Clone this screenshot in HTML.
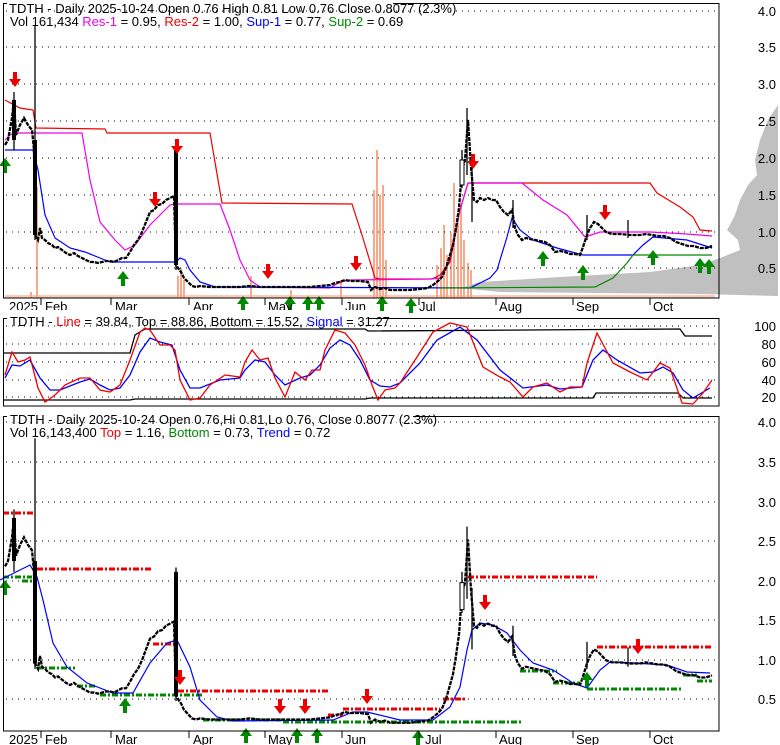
<!DOCTYPE html>
<html><head><meta charset="utf-8"><style>
html,body{margin:0;padding:0;background:#fff}
svg{display:block}
text{font-family:"Liberation Sans",Arial,sans-serif;font-size:13px}
</style></head><body>
<svg width="780" height="745" viewBox="0 0 780 745" xmlns="http://www.w3.org/2000/svg">
<defs>
<g id="dn"><rect x="-2" y="-8" width="4" height="8" fill="#e00"/><polygon points="-6,-1 6,-1 0,7" fill="#e00"/></g>
<g id="up"><rect x="-2" y="0" width="4" height="8" fill="#080"/><polygon points="-6,1 6,1 0,-7" fill="#080"/></g>
<g id="c">
<polyline vector-effect="non-scaling-stroke" fill="none" stroke="#000" stroke-width="2.3" stroke-dasharray="4 1" points="5,145 8,140 12,118 14,100 16,135 20,125 24,118 28,125 32,130 34,150 35,235 38,240 40,228 42,238 45,240 48,243 52,245 55,248 58,247 62,250 66,253 70,255 74,253 78,256 82,258 86,260 90,262 94,262 98,263 102,262 106,261 110,261 114,262 118,260 122,258 126,258 130,252 134,245 138,240 142,232 146,222 150,212 154,210 158,205 162,204 166,200 170,198 174,196 176,265 178,268 181,272 184,278 188,282 192,286 196,287 200,286 210,287 220,287 230,287 240,287 250,286 260,287 270,287 280,287 290,287 300,287 310,287 320,286 330,285 335,283 340,282 345,280 350,281 360,281 368,282 371,290 375,287 380,289 385,288 390,290 400,290 410,290 420,289 428,288 433,285 438,281 442,277 446,268 450,255 453,245 456,228 459,208 462,170 465,160 468,120 471,167 474,200 477,202 480,198 484,200 488,198 492,200 496,200 500,207 504,212 508,215 512,210 515,228 518,235 522,240 526,238 530,239 535,240 540,241 545,242 550,245 555,252 560,251 565,252 570,254 575,254 580,255 583,247 587,235 590,228 594,222 598,224 602,228 606,232 612,234 620,234 630,235 640,235 646,234 652,235 658,236 664,236 670,238 676,242 682,244 688,246 694,246 700,248 706,248 712,246"/>
<g stroke="#000" stroke-width="1.3">
<line x1="35" y1="26" x2="35" y2="240" vector-effect="non-scaling-stroke"/>
<line x1="14" y1="92" x2="14" y2="150" vector-effect="non-scaling-stroke"/>
<line x1="176" y1="146" x2="176" y2="270" vector-effect="non-scaling-stroke"/>
<line x1="467" y1="108" x2="467" y2="175" vector-effect="non-scaling-stroke"/>
<line x1="462" y1="150" x2="462" y2="188" vector-effect="non-scaling-stroke"/>
<line x1="472" y1="165" x2="472" y2="222" vector-effect="non-scaling-stroke"/>
<line x1="513" y1="200" x2="513" y2="228" vector-effect="non-scaling-stroke"/>
<line x1="587" y1="215" x2="587" y2="240" vector-effect="non-scaling-stroke"/>
<line x1="628" y1="220" x2="628" y2="238" vector-effect="non-scaling-stroke"/>
</g>
<rect x="33" y="140" width="4" height="95" fill="#000"/>
<rect x="174" y="150" width="4" height="115" fill="#000"/>
<rect x="460" y="160" width="4" height="25" fill="#fff" stroke="#000" vector-effect="non-scaling-stroke"/>
<rect x="12" y="100" width="4" height="40" fill="#000"/>
</g>
</defs>

<g fill="#f9a889">
<rect x="36" y="187" width="2" height="111"/><rect x="177" y="276" width="2" height="22"/><rect x="180" y="268" width="2" height="30"/><rect x="183" y="280" width="2" height="18"/><rect x="250" y="276" width="2" height="22"/><rect x="373" y="190" width="2" height="108"/><rect x="376" y="150" width="2" height="148"/><rect x="379" y="195" width="2" height="103"/><rect x="382" y="185" width="2" height="113"/><rect x="385" y="260" width="2" height="38"/><rect x="436" y="265" width="2" height="33"/><rect x="440" y="248" width="2" height="50"/><rect x="443" y="225" width="2" height="73"/><rect x="446" y="255" width="2" height="43"/><rect x="450" y="233" width="2" height="65"/><rect x="453" y="183" width="2" height="115"/><rect x="457" y="223" width="2" height="75"/><rect x="460" y="205" width="2" height="93"/><rect x="463" y="240" width="2" height="58"/><rect x="467" y="263" width="2" height="35"/><rect x="470" y="270" width="2" height="28"/><rect x="340" y="280" width="2" height="18"/><rect x="290" y="290" width="2" height="8"/><rect x="30" y="292" width="2" height="6"/>
<rect x="5" y="295" width="710" height="3" opacity="0.6"/>
</g>
<polygon fill="#c0c0c0" points="778,105 768,120 760,140 755,160 757,175 748,185 740,200 735,215 727,230 738,240 740,250 720,258 700,265 650,272 560,277 480,282 460,288 500,292 700,294 778,296"/>
<g stroke="#000" stroke-width="1" stroke-dasharray="1 5" fill="none">
<line x1="6" y1="11" x2="719" y2="11"/><line x1="6" y1="47" x2="719" y2="47"/><line x1="6" y1="84" x2="719" y2="84"/><line x1="6" y1="121" x2="719" y2="121"/><line x1="6" y1="158" x2="719" y2="158"/><line x1="6" y1="195" x2="719" y2="195"/><line x1="6" y1="232" x2="719" y2="232"/><line x1="6" y1="268" x2="719" y2="268"/>
</g>
<g fill="none" stroke-width="1.2">
<polyline stroke="#e00" points="5,100 20,108 33,110 36,128 105,129 107,133 210,133 222,203 352,204 362,235 375,278 380,279 432,279 440,275 450,262 460,210 468,183 650,183 657,193 680,207 693,217 700,230 712,231"/>
<polyline stroke="#e0e" points="5,140 10,135 14,133 82,133 90,180 100,222 115,240 125,250 135,245 150,225 170,205 175,204 220,204 230,230 240,260 250,280 260,287 330,288 340,282 350,280 430,279 440,278 448,265 460,210 468,183 522,183 543,200 567,215 585,237 600,232 650,232 687,234 712,236"/>
<polyline stroke="#00f" points="5,150 33,150 38,170 45,215 55,238 70,248 85,252 100,258 110,262 176,262 180,258 185,260 190,270 200,282 215,287 470,288 480,283 490,278 497,270 507,237 512,218 520,230 533,240 557,248 583,255 633,255 643,245 653,237 687,240 712,248"/>
<polyline stroke="#080" points="440,288 595,287 613,278 627,263 633,255 712,255"/>
</g>
<use href="#c"/>
<g>
<use href="#dn" x="15" y="80"/><use href="#dn" x="177" y="147"/><use href="#dn" x="155" y="200"/><use href="#dn" x="268" y="272"/><use href="#dn" x="356" y="264"/><use href="#dn" x="473" y="162"/><use href="#dn" x="605" y="213"/>
<use href="#up" x="5" y="165"/><use href="#up" x="123" y="278"/><use href="#up" x="243" y="303"/><use href="#up" x="290" y="303"/><use href="#up" x="308" y="303"/><use href="#up" x="319" y="303"/><use href="#up" x="382" y="303"/><use href="#up" x="411" y="305"/><use href="#up" x="543" y="258"/><use href="#up" x="583" y="272"/><use href="#up" x="653" y="257"/><use href="#up" x="700" y="265"/><use href="#up" x="709" y="266"/>
</g>
<rect x="3.5" y="3.5" width="715.5" height="294.5" fill="none" stroke="#000"/>
<rect x="7" y="0" width="386" height="8" fill="#fff"/>
<text x="9" y="13">TDTH - Daily 2025-10-24 Open 0.76  High 0.81  Low 0.76  Close 0.8077 (2.3%)</text>
<text x="10" y="26">Vol 161,434 <tspan fill="#e0e">Res-1</tspan> = 0.95, <tspan fill="#e00">Res-2</tspan> = 1.00, <tspan fill="#00f">Sup-1</tspan> = 0.77, <tspan fill="#080">Sup-2</tspan> = 0.69</text>
<g text-anchor="end">
<text x="776" y="16">4.0</text><text x="776" y="52">3.5</text><text x="776" y="89">3.0</text><text x="776" y="126">2.5</text><text x="776" y="163">2.0</text><text x="776" y="200">1.5</text><text x="776" y="237">1.0</text><text x="776" y="273">0.5</text>
</g>
<g stroke="#000"><line x1="41" y1="298" x2="41" y2="305"/><line x1="111" y1="298" x2="111" y2="305"/><line x1="189" y1="298" x2="189" y2="305"/><line x1="265" y1="298" x2="265" y2="305"/><line x1="342" y1="298" x2="342" y2="305"/><line x1="419" y1="298" x2="419" y2="305"/><line x1="496" y1="298" x2="496" y2="305"/><line x1="573" y1="298" x2="573" y2="305"/><line x1="650" y1="298" x2="650" y2="305"/></g>
<g><text x="9" y="311">2025</text><text x="45" y="311">Feb</text><text x="115" y="311">Mar</text><text x="193" y="311">Apr</text><text x="268" y="311">May</text><text x="345" y="311">Jun</text><text x="419" y="311">Jul</text><text x="499" y="311">Aug</text><text x="576" y="311">Sep</text><text x="653" y="311">Oct</text></g>

<g stroke="#000" stroke-width="1" stroke-dasharray="1 5" fill="none">
<line x1="6" y1="326" x2="719" y2="326"/><line x1="6" y1="344" x2="719" y2="344"/><line x1="6" y1="362" x2="719" y2="362"/><line x1="6" y1="380" x2="719" y2="380"/><line x1="6" y1="397" x2="719" y2="397"/>
</g>
<g fill="none" stroke-width="1.3">
<polyline stroke="#000" points="4,353 130,353 135,335 145,329 365,329 368,331 680,329 685,336 712,336"/>
<polyline stroke="#000" points="4,400 130,400 135,399 365,399 370,398 593,398 596,393 678,393 683,398 712,398"/>
<polyline stroke="#00f" points="5,378 12,365 20,366 30,360 40,378 50,390 60,390 80,382 90,379 100,385 110,390 120,388 130,375 140,352 150,338 160,342 172,345 180,370 190,388 200,388 220,380 240,378 245,370 255,360 265,362 275,375 285,385 300,378 310,375 320,365 330,348 340,340 350,345 360,360 370,380 380,386 390,387 400,383 420,363 437,340 460,327 477,340 500,370 523,388 547,385 560,389 582,387 593,360 603,350 617,360 640,373 653,372 663,367 673,373 683,390 693,398 710,388"/>
<polyline stroke="#e00" points="5,375 12,352 18,362 25,360 30,357 38,388 45,402 55,395 65,385 80,378 90,378 100,390 110,392 120,385 130,360 140,332 145,328 150,330 160,345 170,345 175,350 180,380 190,400 200,398 210,385 225,375 240,377 245,362 252,350 260,360 268,358 275,378 285,397 295,372 305,380 312,370 320,370 325,350 335,330 345,333 355,345 365,365 372,385 378,400 385,390 395,388 400,383 417,357 433,332 450,323 467,327 483,367 500,377 510,382 523,397 533,387 547,383 560,392 570,387 582,387 587,363 597,333 613,363 630,372 647,380 660,363 670,368 682,403 693,404 703,393 712,380"/>
</g>
<rect x="3.5" y="318.5" width="715.5" height="87.5" fill="none" stroke="#000"/>
<rect x="7" y="310" width="362" height="13" fill="#fff"/>
<text x="10" y="326">TDTH - <tspan fill="#e00">Line</tspan> = 39.84, Top = 88.86, Bottom = 15.52, <tspan fill="#00f">Signal</tspan> = 31.27</text>
<g text-anchor="end"><text x="776" y="331">100</text><text x="776" y="349">80</text><text x="776" y="367">60</text><text x="776" y="385">40</text><text x="776" y="402">20</text></g>

<g stroke="#000" stroke-width="1" stroke-dasharray="1 5" fill="none">
<line x1="6" y1="422" x2="719" y2="422"/><line x1="6" y1="462" x2="719" y2="462"/><line x1="6" y1="502" x2="719" y2="502"/><line x1="6" y1="541" x2="719" y2="541"/><line x1="6" y1="581" x2="719" y2="581"/><line x1="6" y1="620" x2="719" y2="620"/><line x1="6" y1="660" x2="719" y2="660"/><line x1="6" y1="699" x2="719" y2="699"/>
</g>
<g fill="none" stroke-width="3" stroke-dasharray="6 2 2 2">
<g stroke="#e00"><line x1="3" y1="513" x2="35" y2="513"/><line x1="37" y1="569" x2="152" y2="569"/><line x1="153" y1="644" x2="175" y2="644"/><line x1="178" y1="691" x2="328" y2="691"/><line x1="328" y1="715" x2="343" y2="715"/><line x1="343" y1="709" x2="440" y2="709"/><line x1="443" y1="699" x2="467" y2="699"/><line x1="468" y1="577" x2="597" y2="577"/><line x1="597" y1="647" x2="713" y2="647"/></g>
<g stroke="#080"><line x1="3" y1="577" x2="32" y2="577"/><line x1="22" y1="581" x2="32" y2="581"/><line x1="37" y1="668" x2="75" y2="668"/><line x1="77" y1="686" x2="97" y2="686"/><line x1="100" y1="695" x2="203" y2="695"/><line x1="203" y1="720" x2="283" y2="720"/><line x1="283" y1="722" x2="523" y2="722"/><line x1="520" y1="671" x2="557" y2="671"/><line x1="553" y1="683" x2="580" y2="683"/><line x1="587" y1="689" x2="683" y2="689"/><line x1="683" y1="675" x2="697" y2="675"/><line x1="697" y1="681" x2="712" y2="681"/></g>
</g>
<polyline fill="none" stroke="#00f" stroke-width="1.2" points="0,580 30,565 37,577 43,600 53,643 67,667 87,683 113,693 133,693 150,663 167,643 177,640 190,667 200,700 217,717 233,721 333,720 353,712 367,712 400,720 433,720 450,707 460,687 467,650 472,630 480,623 493,625 507,633 520,650 533,663 553,670 573,683 587,688 600,670 610,662 633,663 667,665 687,672 710,673"/>
<use href="#c" transform="matrix(1 0 0 1.0777 0 410.2)"/>
<g>
<use href="#dn" x="180" y="678"/><use href="#dn" x="280" y="707"/><use href="#dn" x="305" y="707"/><use href="#dn" x="367" y="697"/><use href="#dn" x="485" y="603"/><use href="#dn" x="638" y="647"/>
<use href="#up" x="5" y="587"/><use href="#up" x="125" y="705"/><use href="#up" x="246" y="735"/><use href="#up" x="297" y="735"/><use href="#up" x="317" y="735"/><use href="#up" x="418" y="737"/><use href="#up" x="587" y="679"/>
</g>
<rect x="3.5" y="416.5" width="715.5" height="314.5" fill="none" stroke="#000"/>
<rect x="7" y="408" width="406" height="14" fill="#fff"/>
<text x="10" y="424">TDTH - Daily 2025-10-24 Open 0.76,Hi 0.81,Lo 0.76, Close 0.8077 (2.3%)</text>
<text x="10" y="437">Vol 16,143,400 <tspan fill="#e00">Top</tspan> = 1.16, <tspan fill="#080">Bottom</tspan> = 0.73, <tspan fill="#00f">Trend</tspan> = 0.72</text>
<g text-anchor="end">
<text x="776" y="427">4.0</text><text x="776" y="467">3.5</text><text x="776" y="507">3.0</text><text x="776" y="546">2.5</text><text x="776" y="586">2.0</text><text x="776" y="625">1.5</text><text x="776" y="665">1.0</text><text x="776" y="704">0.5</text>
</g>
<g stroke="#000"><line x1="41" y1="731" x2="41" y2="738"/><line x1="111" y1="731" x2="111" y2="738"/><line x1="189" y1="731" x2="189" y2="738"/><line x1="265" y1="731" x2="265" y2="738"/><line x1="342" y1="731" x2="342" y2="738"/><line x1="419" y1="731" x2="419" y2="738"/><line x1="496" y1="731" x2="496" y2="738"/><line x1="573" y1="731" x2="573" y2="738"/><line x1="650" y1="731" x2="650" y2="738"/></g>
<g><text x="9" y="744">2025</text><text x="45" y="744">Feb</text><text x="115" y="744">Mar</text><text x="193" y="744">Apr</text><text x="268" y="744">May</text><text x="345" y="744">Jun</text><text x="425" y="744">Jul</text><text x="499" y="744">Aug</text><text x="576" y="744">Sep</text><text x="653" y="744">Oct</text></g>
</svg>
</body></html>
